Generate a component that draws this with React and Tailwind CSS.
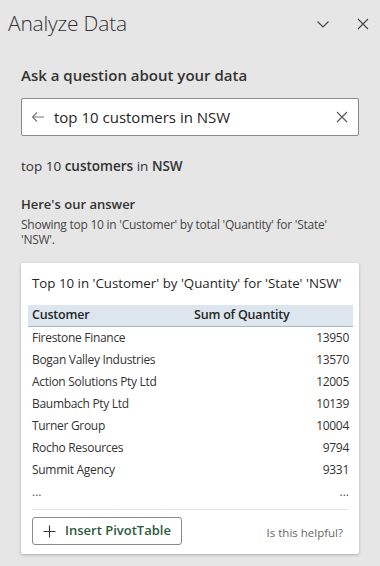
import React from "react";

const rows = [
  ["Firestone Finance", "13950"],
  ["Bogan Valley Industries", "13570"],
  ["Action Solutions Pty Ltd", "12005"],
  ["Baumbach Pty Ltd", "10139"],
  ["Turner Group", "10004"],
  ["Rocho Resources", "9794"],
  ["Summit Agency", "9331"],
];

const App = () => {
  return (
    <div
      className="w-[380px] h-[566px] bg-[#e6e6e6] overflow-hidden text-[#262626]"
      style={{ fontFamily: '"Open Sans", "Noto Sans", sans-serif' }}
    >
      {/* header */}
      <div className="flex items-center h-[48px] pl-[8px] pr-[8px]">
        <span className="text-[21px] font-light text-[#333] tracking-[-0.2px]">Analyze Data</span>
        <div className="ml-auto flex items-center gap-[26px] pr-[2px]">
          <svg width="14" height="14" viewBox="0 0 14 14" className="text-[#444]">
            <path d="M1.5 4.5 L7 10 L12.5 4.5" fill="none" stroke="currentColor" strokeWidth="1.1" />
          </svg>
          <svg width="14" height="14" viewBox="0 0 14 14" className="text-[#444]">
            <path d="M2 2 L12 12 M12 2 L2 12" fill="none" stroke="currentColor" strokeWidth="1.1" />
          </svg>
        </div>
      </div>

      <div className="px-[21px]">
        <div className="pt-[17px] text-[15px] font-semibold text-[#333] leading-[20px]">
          Ask a question about your data
        </div>

        <div className="mt-[13px] h-[38px] bg-white border border-[#8a8a8a] rounded-[2px] flex items-center pl-[9px] pr-[9px]">
          <svg width="14" height="12" viewBox="0 0 14 12" className="text-[#777]">
            <path d="M13 6 H1.5 M6 1.5 L1.5 6 L6 10.5" fill="none" stroke="currentColor" strokeWidth="1.1" />
          </svg>
          <span className="ml-[9px] text-[15px] text-[#262626]">top 10 customers in NSW</span>
          <svg width="12" height="12" viewBox="0 0 12 12" className="ml-auto mr-[1px] text-[#555]">
            <path d="M1 1 L11 11 M11 1 L1 11" fill="none" stroke="currentColor" strokeWidth="1.1" />
          </svg>
        </div>

        <div className="mt-[20px] text-[13.5px] leading-[20px] text-[#333]">
          top 10 <span className="font-semibold">customers</span> in{" "}
          <span className="font-semibold">NSW</span>
        </div>

        <div className="mt-[19px] text-[13px] font-semibold leading-[18px] text-[#333]">
          Here's our answer
        </div>
        <div className="mt-[4px] text-[12px] tracking-[-0.25px] leading-[15px] text-[#474747]">
          Showing top 10 in 'Customer' by total 'Quantity' for 'State' 'NSW'.
        </div>

        {/* answer card */}
        <div className="mt-[16px] bg-white rounded-[2px] shadow-[0_1px_3px_rgba(0,0,0,0.25)] px-[7px] pt-[11px] pb-[9px]">
          <div className="px-[4px] text-[13.3px] leading-[18px] text-[#262626]">
            Top 10 in 'Customer' by 'Quantity' for 'State' 'NSW'
          </div>

          <div className="mt-[13px] mr-[-1px]">
            <div className="h-[22px] flex items-center bg-[#dde6ef] border-b border-[#a9b6c4] px-[4px] text-[12.5px] font-semibold tracking-[-0.2px] text-[#262626]">
              <span className="w-[162px]">Customer</span>
              <span>Sum of Quantity</span>
            </div>
            {rows.map(([name, qty]) => (
              <div key={name} className="h-[22px] flex items-center px-[4px] text-[12px] tracking-[-0.3px] text-[#333]">
                <span>{name}</span>
                <span className="ml-auto">{qty}</span>
              </div>
            ))}
            <div className="h-[22px] flex items-center px-[4px] text-[12px] text-[#555]">
              <span>...</span>
              <span className="ml-auto">...</span>
            </div>
          </div>

          <div className="mx-[4px] mt-[6px] border-t border-[#e3e3e3]" />

          <div className="mt-[7px] flex items-center px-[4px]">
            <button className="h-[28px] flex items-center gap-[9px] pl-[10px] pr-[10px] border border-[#8a8a8a] rounded-[3px] bg-white">
              <svg width="13" height="13" viewBox="0 0 13 13" className="text-[#333]">
                <path d="M6.5 0.5 V12.5 M0.5 6.5 H12.5" fill="none" stroke="currentColor" strokeWidth="1.1" />
              </svg>
              <span className="text-[13px] font-semibold text-[#2d5a3c]">Insert PivotTable</span>
            </button>
            <span className="ml-auto mr-[5px] mt-[4px] text-[11.5px] text-[#666]">Is this helpful?</span>
          </div>
        </div>
      </div>
    </div>
  );
};

export default App;
